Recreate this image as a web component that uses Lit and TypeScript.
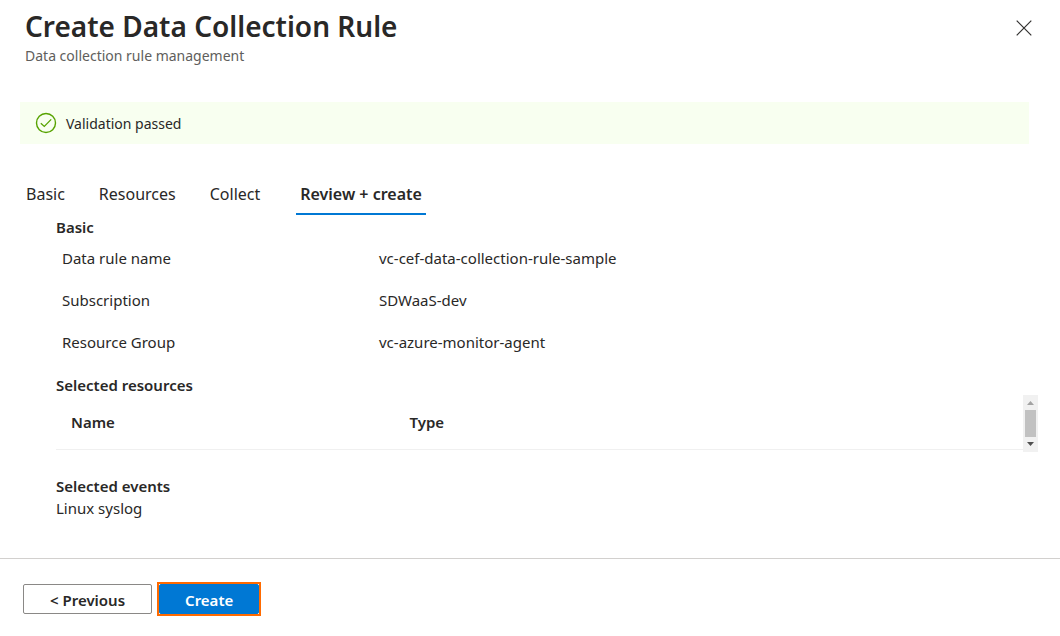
import { LitElement, html, css } from "lit";
import { customElement, property, state } from "lit/decorators.js";
import { classMap } from "lit/directives/class-map.js";

@customElement("info-banner")
class InfoBanner extends LitElement {
  @property() message = "";

  static styles = css`
    :host {
      display: flex;
      align-items: center;
      gap: 9px;
      height: 42px;
      padding: 0 15px;
      background: #f8fff0;
      font-size: 14px;
    }
    svg {
      display: block;
      flex: none;
    }
    .message {
      padding-top: 2px;
    }
  `;

  render() {
    return html`
      <svg width="22" height="22" viewBox="0 0 22 22" fill="none" stroke="#57a300" aria-hidden="true">
        <circle cx="11" cy="11" r="9.5" stroke-width="1.4" />
        <path d="M5.8 11.2 9.3 14.4 16.2 7.4" stroke-width="1.3" />
      </svg>
      <span class="message" role="status">${this.message}</span>
    `;
  }
}

@customElement("app-root")
class AppRoot extends LitElement {
  @state() private activeTab = "Review + create";

  private tabs = ["Basic", "Resources", "Collect", "Review + create"];

  private details = [
    ["Data rule name", "vc-cef-data-collection-rule-sample"],
    ["Subscription", "SDWaaS-dev"],
    ["Resource Group", "vc-azure-monitor-agent"],
  ];

  static styles = css`
    :host {
      display: block;
      background: #fff;
      color: #292827;
      font-family: "Segoe UI", "Noto Sans", sans-serif;
      font-size: 15px;
      line-height: 24px;
    }
    * {
      box-sizing: border-box;
    }
    button {
      font: inherit;
      color: inherit;
      cursor: pointer;
    }
    h1,
    h2,
    p,
    dl,
    dd {
      margin: 0;
    }
    .header {
      display: flex;
      justify-content: space-between;
      align-items: flex-start;
      padding: 8px 26px 0 25px;
    }
    h1 {
      font-size: 28px;
      line-height: 36px;
      font-weight: 600;
    }
    .subtitle {
      color: #605e5c;
      font-size: 14px;
    }
    .close {
      display: flex;
      margin-top: 10px;
      padding: 2px;
      border: 0;
      background: none;
    }
    info-banner {
      margin: 34px 31px 0 20px;
    }
    .tabs {
      display: flex;
      gap: 28px;
      margin: 36px 23px 0;
    }
    .tab {
      padding: 0 3px 5px;
      border: 0;
      border-bottom: 2px solid transparent;
      background: none;
      font-size: 16px;
      line-height: 28px;
    }
    .tab.active {
      margin-left: 5px;
      padding: 0 4px 5px;
      border-color: #0078d4;
      font-weight: 600;
    }
    .content {
      padding: 2px 22px 38px 56px;
    }
    h2 {
      font-size: 15px;
      line-height: 20px;
      font-weight: 600;
    }
    .details {
      display: grid;
      grid-template-columns: 317px 1fr;
      padding: 0 6px;
      line-height: 42px;
    }
    .resources {
      margin-top: 12px;
    }
    .scroller {
      display: flex;
      height: 57px;
      overflow: hidden;
    }
    table {
      flex: 1;
      height: 55px;
      border-collapse: collapse;
      table-layout: fixed;
    }
    th {
      padding: 0 15px;
      border-bottom: 1px solid #f0f0f0;
      text-align: left;
      font-weight: 600;
    }
    .name {
      width: 35%;
    }
    .scrollbar {
      display: flex;
      flex-direction: column;
      align-items: center;
      justify-content: space-between;
      width: 15px;
      padding: 6px 0;
      background: #f1f1f1;
    }
    .thumb {
      width: 11px;
      height: 27px;
      background: #c1c1c1;
    }
    .events {
      margin-top: 24px;
    }
    .footer {
      display: flex;
      align-items: center;
      gap: 5px;
      padding: 23px 23px 20px;
      border-top: 1px solid #d2d0ce;
    }
    .action {
      display: block;
      height: 30px;
      padding: 2px 26px 0;
      border: 1px solid #8a8886;
      border-radius: 2px;
      background: #fff;
      font-weight: 600;
    }
    .highlight {
      border: 2px solid #ff6a00;
    }
    .create {
      padding: 2px 25px 0;
      border-color: #0078d4;
      background: #0078d4;
      color: #fff;
    }
  `;

  render() {
    return html`
      <header class="header">
        <div>
          <h1>Create Data Collection Rule</h1>
          <p class="subtitle">Data collection rule management</p>
        </div>
        <button class="close" aria-label="Close">
          <svg width="16" height="16" viewBox="0 0 16 16" stroke="#323130" stroke-width="1.2" aria-hidden="true">
            <path d="M.7.7 15.3 15.3M15.3.7.7 15.3" />
          </svg>
        </button>
      </header>
      <info-banner message="Validation passed"></info-banner>
      <nav class="tabs" role="tablist">
        ${this.tabs.map(
          (tab) => html`<button
            role="tab"
            aria-selected=${tab === this.activeTab ? "true" : "false"}
            class=${classMap({ tab: true, active: tab === this.activeTab })}
            @click=${() => (this.activeTab = tab)}
          >${tab}</button>`,
        )}
      </nav>
      <main class="content">
        <h2>Basic</h2>
        <dl class="details">
          ${this.details.map(([label, value]) => html`<dt>${label}</dt><dd>${value}</dd>`)}
        </dl>
        <section class="resources">
          <h2>Selected resources</h2>
          <div class="scroller">
            <table>
              <thead>
                <tr>
                  <th class="name" scope="col">Name</th>
                  <th scope="col">Type</th>
                </tr>
              </thead>
            </table>
            <div class="scrollbar" aria-hidden="true">
              <svg width="7" height="4" viewBox="0 0 7 4" fill="#a3a3a3"><path d="M0 4 3.5 0 7 4z" /></svg>
              <div class="thumb"></div>
              <svg width="7" height="4" viewBox="0 0 7 4" fill="#505050"><path d="M0 0h7L3.5 4z" /></svg>
            </div>
          </div>
        </section>
        <section class="events">
          <h2>Selected events</h2>
          <p>Linux syslog</p>
        </section>
      </main>
      <footer class="footer">
        <button class="action">&lt; Previous</button>
        <div class="highlight">
          <button class="action create">Create</button>
        </div>
      </footer>
    `;
  }
}
